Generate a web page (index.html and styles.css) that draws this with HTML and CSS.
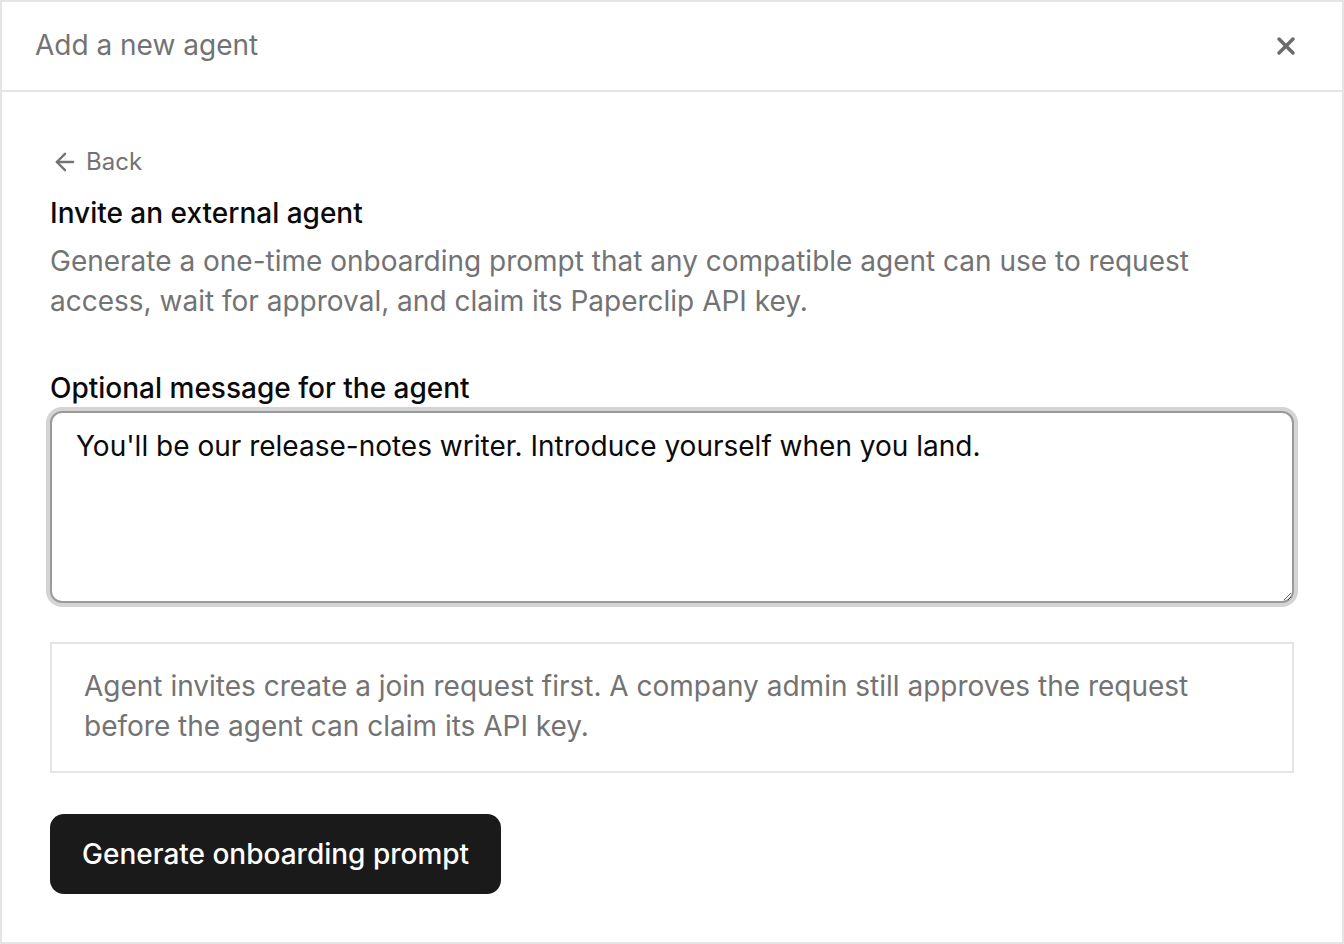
FILE: index.html
```html
<!DOCTYPE html>
<html lang="en">
<head>
<meta charset="utf-8">
<title>Add a new agent</title>
<link rel="stylesheet" href="styles.css">
</head>
<body>
<div class="dialog">
  <header class="dialog-header">
    <h1 class="dialog-title">Add a new agent</h1>
    <button class="close-btn" aria-label="Close">
      <svg width="28" height="28" viewBox="0 0 24 24" fill="none" stroke="currentColor" stroke-width="3" stroke-linecap="round" stroke-linejoin="round"><path d="M18 6 6 18"/><path d="m6 6 12 12"/></svg>
    </button>
  </header>
  <div class="dialog-body">
    <button class="back-btn">
      <svg width="28" height="28" viewBox="0 0 24 24" fill="none" stroke="currentColor" stroke-width="2" stroke-linecap="round" stroke-linejoin="round"><path d="m12 19-7-7 7-7"/><path d="M19 12H5"/></svg>
      <span>Back</span>
    </button>
    <h2 class="section-title">Invite an external agent</h2>
    <p class="section-desc">Generate a one-time onboarding prompt that any compatible agent can use to request access, wait for approval, and claim its Paperclip API key.</p>
    <label class="field-label" for="msg">Optional message for the agent</label>
    <textarea id="msg" class="field-textarea">You'll be our release-notes writer. Introduce yourself when you land.</textarea>
    <div class="note">Agent invites create a join request first. A company admin still approves the request before the agent can claim its API key.</div>
    <button class="primary-btn">Generate onboarding prompt</button>
  </div>
</div>
</body>
</html>
```

FILE: styles.css
```css
* { box-sizing: border-box; }
html, body { margin: 0; padding: 0; background: #fff; }
body {
  font-family: Inter, "Noto Sans", sans-serif;
  color: #0a0a0a;
}
.dialog {
  width: 1344px;
  height: 944px;
  border: 2px solid #e5e5e5;
  background: #fff;
  display: flex;
  flex-direction: column;
}
.dialog-header {
  height: 90px;
  border-bottom: 2px solid #e5e5e5;
  display: flex;
  align-items: center;
  justify-content: space-between;
  padding: 0 42px 0 33px;
  flex-shrink: 0;
}
.dialog-title {
  margin: 0 0 2px 0;
  font-size: 28px;
  font-weight: 400;
  color: #737373;
}
.close-btn {
  border: 0;
  background: none;
  padding: 0;
  color: #6b6b6b;
  display: flex;
  cursor: pointer;
}
.dialog-body {
  padding: 50px 48px 48px 48px;
  display: flex;
  flex-direction: column;
  align-items: flex-start;
}
.back-btn {
  border: 0;
  background: none;
  padding: 0 0 0 1px;
  display: flex;
  align-items: center;
  gap: 7px;
  font-family: inherit;
  font-size: 24px;
  line-height: 40px;
  color: #737373;
  cursor: pointer;
}
.section-title {
  margin: 11px 0 0 0;
  font-size: 28px;
  line-height: 40px;
  font-weight: 500;
  color: #0a0a0a;
}
.section-desc {
  margin: 8px 0 0 0;
  font-size: 28px;
  line-height: 40px;
  color: #737373;
}
.field-label {
  margin-top: 48px;
  font-size: 28px;
  line-height: 38px;
  font-weight: 500;
  color: #0a0a0a;
}
.field-textarea {
  margin-top: 4px;
  width: 100%;
  height: 192px;
  border: 2px solid #9a9a9a;
  border-radius: 12px;
  box-shadow: 0 0 0 4px #d4d4d4;
  padding: 13px 24px;
  font-family: inherit;
  font-size: 28px;
  line-height: 40px;
  color: #0a0a0a;
  resize: vertical;
  outline: none;
}
.note {
  margin-top: 39px;
  width: 100%;
  border: 2px solid #e5e5e5;
  padding: 22px 32px 25px 32px;
  font-size: 28px;
  line-height: 40px;
  color: #737373;
}
.primary-btn {
  margin-top: 41px;
  height: 80px;
  padding: 0 32px;
  border: 0;
  border-radius: 14px;
  background: #1a1a1a;
  color: #fff;
  font-family: inherit;
  font-size: 28px;
  font-weight: 500;
  cursor: pointer;
}
```
